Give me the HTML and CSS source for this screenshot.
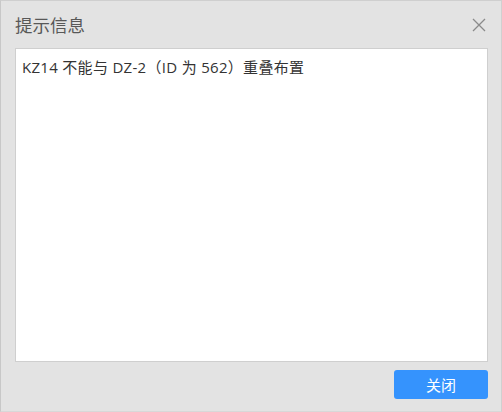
FILE: index.html
```html
<!DOCTYPE html>
<html lang="zh">
<head>
<meta charset="utf-8">
<link rel="stylesheet" href="styles.css">
</head>
<body>
<div class="dialog">
  <div class="header">
    <span class="title">提示信息</span>
    <span class="close" aria-label="关闭">
      <svg width="14" height="14" viewBox="0 0 14 14"><path d="M1 1L13 13M13 1L1 13" stroke="#8a8a8a" stroke-width="1.3" fill="none"/></svg>
    </span>
  </div>
  <div class="content">KZ14 不能与 DZ-2（ID 为 562）重叠布置</div>
  <div class="footer">
    <button class="btn">关闭</button>
  </div>
</div>
</body>
</html>
```
FILE: styles.css
```css
html, body {
  margin: 0;
  padding: 0;
}
body {
  width: 502px;
  height: 412px;
  background: #e3e3e3;
  font-family: "Noto Sans CJK SC", "Noto Sans", sans-serif;
}
.dialog {
  box-sizing: border-box;
  width: 502px;
  height: 412px;
  border-top: 1px solid #cfcfcf;
  border-left: 1px solid #c8c8c8;
  border-right: 1px solid #d0d0d0;
  border-bottom: 1px solid #d8d8d8;
  display: flex;
  flex-direction: column;
  padding: 0 13px 0 14px;
}
.header {
  height: 47px;
  display: flex;
  align-items: center;
  justify-content: space-between;
}
.title {
  font-size: 17.5px;
  color: #585858;
  line-height: 20px;
  padding-top: 1px;
}
.close {
  display: flex;
  width: 14px;
  height: 14px;
  margin-right: 2px;
  margin-top: 1px;
}
.content {
  box-sizing: border-box;
  height: 314px;
  background: #fff;
  border: 1px solid #cfcfcf;
  padding: 8px 6px;
  font-family: "Open Sans", "Noto Sans CJK SC", sans-serif;
  font-size: 15px;
  line-height: 21px;
  letter-spacing: 0.3px;
  color: #333;
}
.footer {
  display: flex;
  justify-content: flex-end;
  padding-top: 8px;
}
.btn {
  width: 94px;
  height: 29px;
  border: none;
  border-radius: 3px;
  background: #3593fd;
  color: #fff;
  font-family: inherit;
  font-size: 15px;
  padding: 0;
}
```
